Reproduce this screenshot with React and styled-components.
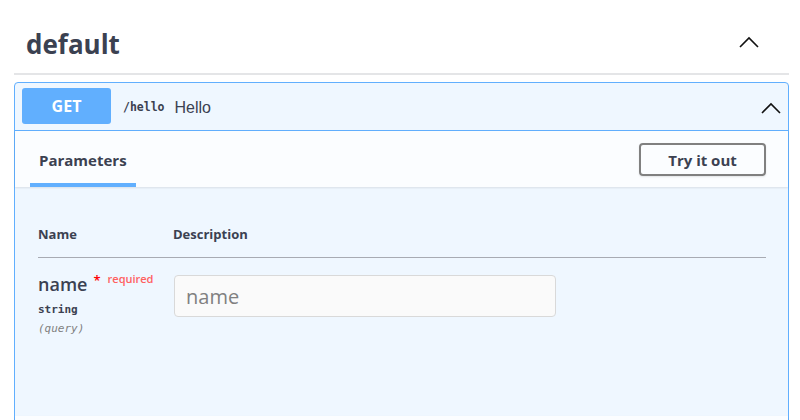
import React from 'react'
import styled, { createGlobalStyle } from 'styled-components'

const GlobalStyle = createGlobalStyle`
  body {
    margin: 0;
    background: #fff;
    font-family: "Open Sans", "Noto Sans", sans-serif;
    color: #3b4151;
  }
`

const Page = styled.div`
  padding: 0 11px 0 14px;
  height: 420px;
  overflow: hidden;
`

const TagHeader = styled.div`
  display: flex;
  align-items: center;
  justify-content: space-between;
  height: 59px;
  padding: 14px 30px 0 12px;
  border-bottom: 2px solid #e4e5e7;
  h3 {
    margin: 0;
    font-size: 26px;
    font-weight: 700;
    color: #3b4151;
  }
  svg {
    margin-top: -3px;
  }
`

const Opblock = styled.div`
  margin-top: 7px;
  border: 1px solid #61affe;
  border-radius: 4px;
  background: #eff7ff;
`

const Summary = styled.div`
  display: flex;
  align-items: center;
  padding: 5px 7px 6px;
  border-bottom: 1px solid #61affe;
  svg {
    margin-top: 3px;
  }
`

const Method = styled.div`
  width: 89px;
  height: 36px;
  border-radius: 3px;
  background: #61affe;
  color: #fff;
  font-size: 16px;
  font-weight: 700;
  display: flex;
  align-items: center;
  justify-content: center;
`

const Path = styled.span`
  margin-left: 12px;
  margin-top: 2px;
  font-family: "DejaVu Sans Mono", monospace;
  font-size: 11.5px;
  font-weight: 700;
  color: #3b4151;
`

const Desc = styled.span`
  margin-left: 10px;
  margin-top: 3px;
  font-family: "Liberation Sans", Arial, sans-serif;
  font-size: 16px;
  color: #3b4151;
  flex: 1;
`

const Arrow = styled.svg`
  width: ${p => p.$size}px;
  height: ${p => p.$size}px;
  fill: none;
  stroke: #111;
  stroke-width: 1.6;
`

const SectionHeader = styled.div`
  display: flex;
  align-items: center;
  justify-content: space-between;
  height: 56px;
  padding: 0 22px 0 15px;
  background: #fbfdff;
  box-shadow: 0 1px 2px rgba(0, 0, 0, 0.1);
`

const Tab = styled.div`
  align-self: stretch;
  display: flex;
  align-items: center;
  padding: 2px 9px 0;
  font-size: 15px;
  font-weight: 700;
  color: #3b4151;
  position: relative;
  &:after {
    content: "";
    position: absolute;
    left: 0;
    right: 0;
    bottom: 0;
    height: 4px;
    background: #61affe;
  }
`

const TryButton = styled.button`
  width: 127px;
  height: 33px;
  border: 2px solid #808080;
  border-radius: 4px;
  background: transparent;
  font-family: "Open Sans", sans-serif;
  font-size: 15px;
  font-weight: 700;
  color: #3b4151;
  box-shadow: 0 1px 2px rgba(0, 0, 0, 0.1);
  margin-top: 1px;
`

const Body = styled.div`
  height: 229px;
  padding: 0 22px 0 23px;
`

const Table = styled.div`
  display: grid;
  grid-template-columns: 135px 1fr;
`

const HeadCell = styled.div`
  font-size: 13px;
  font-weight: 700;
  padding: 38px 0 14px;
  border-bottom: 1px solid #a8abb3;
`

const ParamCol = styled.div`
  padding-top: 13px;
`

const ParamName = styled.div`
  font-size: 18px;
  font-weight: 600;
  color: #3b4151;
  line-height: 26px;
  span {
    color: red;
    font-size: 13px;
    position: relative;
    top: -6px;
    margin-left: 6px;
  }
  small {
    color: #ff6060;
    font-size: 11px;
    font-weight: 600;
    position: relative;
    top: -8px;
    margin-left: 7px;
  }
`

const Mono = styled.div`
  font-family: "DejaVu Sans Mono", monospace;
  font-size: 11px;
  font-weight: ${p => (p.$italic ? 400 : 700)};
  font-style: ${p => (p.$italic ? 'italic' : 'normal')};
  color: ${p => (p.$italic ? '#808080' : '#3b4151')};
  margin-top: ${p => p.$top}px;
`

const Input = styled.input`
  margin-top: 17px;
  margin-left: 1px;
  width: 382px;
  height: 42px;
  box-sizing: border-box;
  border: 1px solid #d9d9d9;
  border-radius: 4px;
  background: #fafafa;
  padding: 0 11px;
  font-family: "Open Sans", sans-serif;
  font-size: 20px;
  &::placeholder {
    color: #808080;
  }
`

const Chevron = ({ size }) => (
  <Arrow $size={size} viewBox="0 0 20 20">
    <path d="M1 15 L10 6 L19 15" />
  </Arrow>
)

export default function App() {
  return (
    <Page>
      <GlobalStyle />
      <TagHeader>
        <h3>default</h3>
        <Chevron size={20} />
      </TagHeader>
      <Opblock>
        <Summary>
          <Method>GET</Method>
          <Path>/hello</Path>
          <Desc>Hello</Desc>
          <Chevron size={20} />
        </Summary>
        <SectionHeader>
          <Tab>Parameters</Tab>
          <TryButton>Try it out</TryButton>
        </SectionHeader>
        <Body>
          <Table>
            <HeadCell>Name</HeadCell>
            <HeadCell>Description</HeadCell>
            <ParamCol>
              <ParamName>
                name<span>*</span>
                <small>required</small>
              </ParamName>
              <Mono $top={3}>string</Mono>
              <Mono $italic $top={6}>(query)</Mono>
            </ParamCol>
            <div>
              <Input placeholder="name" />
            </div>
          </Table>
        </Body>
        <SectionHeader />
      </Opblock>
    </Page>
  )
}
